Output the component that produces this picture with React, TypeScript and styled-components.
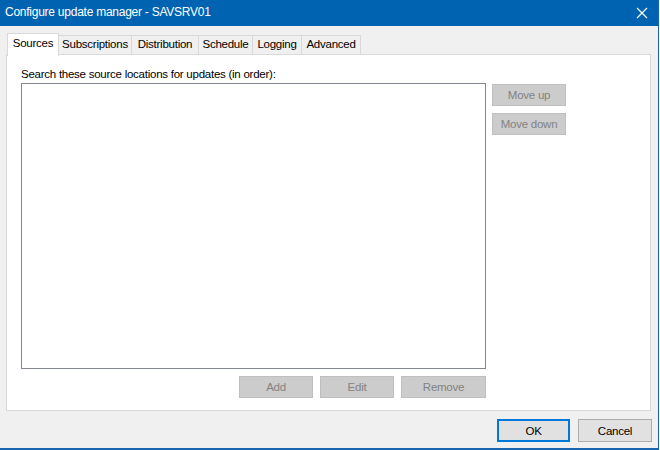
import React from 'react';
import styled, { createGlobalStyle } from 'styled-components';

const GlobalStyle = createGlobalStyle`
  html, body {
    margin: 0;
    padding: 0;
    background: #ffffff;
  }
  body {
    font-family: "Liberation Sans", Arial, sans-serif;
    font-size: 11.5px;
    letter-spacing: -0.25px;
    color: #000;
  }
`;

const TABS = [
  { label: 'Sources', width: 52 },
  { label: 'Subscriptions', width: 74 },
  { label: 'Distribution', width: 68 },
  { label: 'Schedule', width: 55 },
  { label: 'Logging', width: 50 },
  { label: 'Advanced', width: 60 },
];

const App: React.FC = () => {
  const [active, setActive] = React.useState(0);

  return (
    <>
      <GlobalStyle />
      <WindowStyled>
        <TitleBarStyled>
          <TitleStyled>Configure update manager - SAVSRV01</TitleStyled>
          <CloseStyled aria-label="Close">
            <svg width="12" height="12" viewBox="0 0 12 12">
              <path d="M1 1 L11 11 M11 1 L1 11" stroke="#ffffff" strokeWidth="1.2" fill="none" />
            </svg>
          </CloseStyled>
        </TitleBarStyled>

        <BodyStyled>
          <TabRowStyled>
            {TABS.map((tab, index) => (
              <TabStyled
                key={tab.label}
                $active={index === active}
                $width={tab.width}
                onClick={() => setActive(index)}
              >
                {tab.label}
              </TabStyled>
            ))}
          </TabRowStyled>

          <PanelStyled>
            <LabelStyled>Search these source locations for updates (in order):</LabelStyled>
            <ListAreaStyled>
              <ListBoxStyled />
              <SideButtonsStyled>
                <ButtonStyled disabled $width={74}>Move up</ButtonStyled>
                <ButtonStyled disabled $width={74}>Move down</ButtonStyled>
              </SideButtonsStyled>
              <ListButtonsStyled>
                <ButtonStyled disabled $width={74}>Add</ButtonStyled>
                <ButtonStyled disabled $width={74}>Edit</ButtonStyled>
                <ButtonStyled disabled $width={85}>Remove</ButtonStyled>
              </ListButtonsStyled>
            </ListAreaStyled>
          </PanelStyled>

          <FooterStyled>
            <DialogButtonStyled $default>OK</DialogButtonStyled>
            <DialogButtonStyled>Cancel</DialogButtonStyled>
          </FooterStyled>
        </BodyStyled>
      </WindowStyled>
    </>
  );
};

export default App;

const WindowStyled = styled.div`
  width: 659px;
  height: 450px;
  box-sizing: border-box;
  background: #f0f0f0;
  border-right: 1px solid #1a65b0;
  border-bottom: 2px solid #1a65b0;
  display: flex;
  flex-direction: column;
`;

const TitleBarStyled = styled.div`
  height: 26px;
  flex-shrink: 0;
  background: #0063b1;
  color: #ffffff;
  display: flex;
  align-items: center;
  justify-content: space-between;
  padding-left: 5px;
`;

const TitleStyled = styled.div`
  font-size: 12px;
  margin-top: -2px;
`;

const CloseStyled = styled.div`
  width: 30px;
  height: 26px;
  margin-right: 1px;
  display: flex;
  align-items: center;
  justify-content: center;
`;

const BodyStyled = styled.div`
  flex: 1;
  display: flex;
  flex-direction: column;
  padding: 7px 7px 0 6px;
`;

const TabRowStyled = styled.div`
  display: flex;
  align-items: flex-end;
  height: 22px;
  padding-left: 2px;
  position: relative;
  z-index: 1;
`;

const TabStyled = styled.div<{ $active: boolean; $width: number }>`
  box-sizing: border-box;
  width: ${(p) => p.$width}px;
  height: ${(p) => (p.$active ? '23px' : '20px')};
  padding-top: ${(p) => (p.$active ? '3px' : '2px')};
  margin-bottom: ${(p) => (p.$active ? '-1px' : '0')};
  background: ${(p) => (p.$active ? '#ffffff' : '#f0f0f0')};
  border: 1px solid #d9d9d9;
  border-bottom: ${(p) => (p.$active ? 'none' : '1px solid #d9d9d9')};
  margin-left: -1px;
  text-align: center;
  white-space: nowrap;
  cursor: default;
`;

const PanelStyled = styled.div`
  box-sizing: border-box;
  height: 357px;
  background: #ffffff;
  border: 1px solid #d9d9d9;
  margin-top: -1px;
  padding: 12px 0 0 14px;
  display: flex;
  flex-direction: column;
`;

const LabelStyled = styled.div`
  height: 16px;
  line-height: 14px;
`;

const ListAreaStyled = styled.div`
  display: grid;
  grid-template-columns: 465px 74px;
  grid-template-rows: 286px auto;
  column-gap: 6px;
  row-gap: 7px;
`;

const ListBoxStyled = styled.div`
  box-sizing: border-box;
  border: 1px solid #828790;
  background: #ffffff;
`;

const SideButtonsStyled = styled.div`
  display: flex;
  flex-direction: column;
  gap: 7px;
  padding-top: 1px;
`;

const ListButtonsStyled = styled.div`
  display: flex;
  justify-content: flex-end;
  gap: 7px;
`;

const ButtonStyled = styled.button<{ $width: number }>`
  box-sizing: border-box;
  width: ${(p) => p.$width}px;
  height: 22px;
  padding: 0;
  background: #cccccc;
  border: 1px solid #bfbfbf;
  color: #838383;
  font-family: inherit;
  font-size: inherit;
  letter-spacing: inherit;
`;

const FooterStyled = styled.div`
  display: flex;
  justify-content: flex-end;
  gap: 8px;
  padding-top: 8px;
  margin-right: -1px;
`;

const DialogButtonStyled = styled.button<{ $default?: boolean }>`
  box-sizing: border-box;
  width: ${(p) => (p.$default ? '73px' : '74px')};
  height: 23px;
  padding: 0;
  background: #e1e1e1;
  border: ${(p) => (p.$default ? '2px solid #0078d7' : '1px solid #adadad')};
  color: #000;
  font-family: inherit;
  font-size: inherit;
  letter-spacing: inherit;
`;
